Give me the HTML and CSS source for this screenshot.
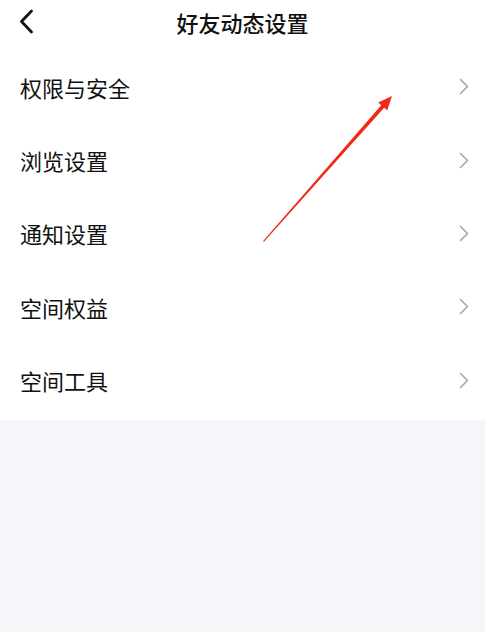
FILE: index.html
```html
<!DOCTYPE html>
<html>
  <head>
    <meta name="viewport" content="width=device-width, initial-scale=1" />
    <link rel="stylesheet" href="styles.css">
  </head>
  <body>
    <div class="page">
      <div class="topbar">
        <svg class="back" width="15" height="25" viewBox="0 0 15 25">
          <path d="M12.5 2 L2.5 12.5 L12.5 23" fill="none" stroke="#111" stroke-width="2.8" stroke-linecap="round" stroke-linejoin="round"/>
        </svg>
        <div class="title">好友动态设置</div>
      </div>

      <ul class="menu">
        <li class="item"><span>权限与安全</span><svg class="more" width="10" height="17" viewBox="0 0 10 17"><path d="M1.5 1.5 L8.5 8.5 L1.5 15.5" fill="none" stroke="#a6a6ab" stroke-width="1.6" stroke-linecap="round" stroke-linejoin="round"/></svg></li>
        <li class="item"><span>浏览设置</span><svg class="more" width="10" height="17" viewBox="0 0 10 17"><path d="M1.5 1.5 L8.5 8.5 L1.5 15.5" fill="none" stroke="#a6a6ab" stroke-width="1.6" stroke-linecap="round" stroke-linejoin="round"/></svg></li>
        <li class="item"><span>通知设置</span><svg class="more" width="10" height="17" viewBox="0 0 10 17"><path d="M1.5 1.5 L8.5 8.5 L1.5 15.5" fill="none" stroke="#a6a6ab" stroke-width="1.6" stroke-linecap="round" stroke-linejoin="round"/></svg></li>
        <li class="item"><span>空间权益</span><svg class="more" width="10" height="17" viewBox="0 0 10 17"><path d="M1.5 1.5 L8.5 8.5 L1.5 15.5" fill="none" stroke="#a6a6ab" stroke-width="1.6" stroke-linecap="round" stroke-linejoin="round"/></svg></li>
        <li class="item"><span>空间工具</span><svg class="more" width="10" height="17" viewBox="0 0 10 17"><path d="M1.5 1.5 L8.5 8.5 L1.5 15.5" fill="none" stroke="#a6a6ab" stroke-width="1.6" stroke-linecap="round" stroke-linejoin="round"/></svg></li>
      </ul>

      <!-- annotation arrow drawn over the list -->
      <svg class="mark" width="485" height="632" viewBox="0 0 485 632">
        <polygon fill="#f2291c" points="263,241.5 263.6,240.6 381.2,105.2 378.2,102.5 392,96 387.2,110.5 384.2,107.8 264,241.8"/>
      </svg>
    </div>
  </body>
</html>
```

FILE: styles.css
```css
* {
  box-sizing: border-box;
}

html, body {
  margin: 0;
  padding: 0;
}

body {
  background: #f5f6f9;
  font-family: "Noto Sans CJK SC", "Noto Sans", sans-serif;
  color: #111;
}

.page {
  position: relative;
  width: 485px;
  height: 632px;
}

.topbar {
  position: relative;
  height: 44px;
  background: #fff;
  display: flex;
  align-items: center;
  justify-content: center;
}

.back {
  position: absolute;
  left: 19px;
  top: 9px;
}

.title {
  font-size: 22px;
  font-weight: 500;
  line-height: 1;
}

.menu {
  list-style: none;
  margin: 0;
  padding: 6px 0 3px;
  background: #fff;
}

.item {
  height: 73.4px;
  display: flex;
  align-items: center;
  justify-content: space-between;
  padding: 0 16px 0 20px;
  font-size: 22px;
  line-height: 1;
}

.mark {
  position: absolute;
  left: 0;
  top: 0;
  pointer-events: none;
}
```
